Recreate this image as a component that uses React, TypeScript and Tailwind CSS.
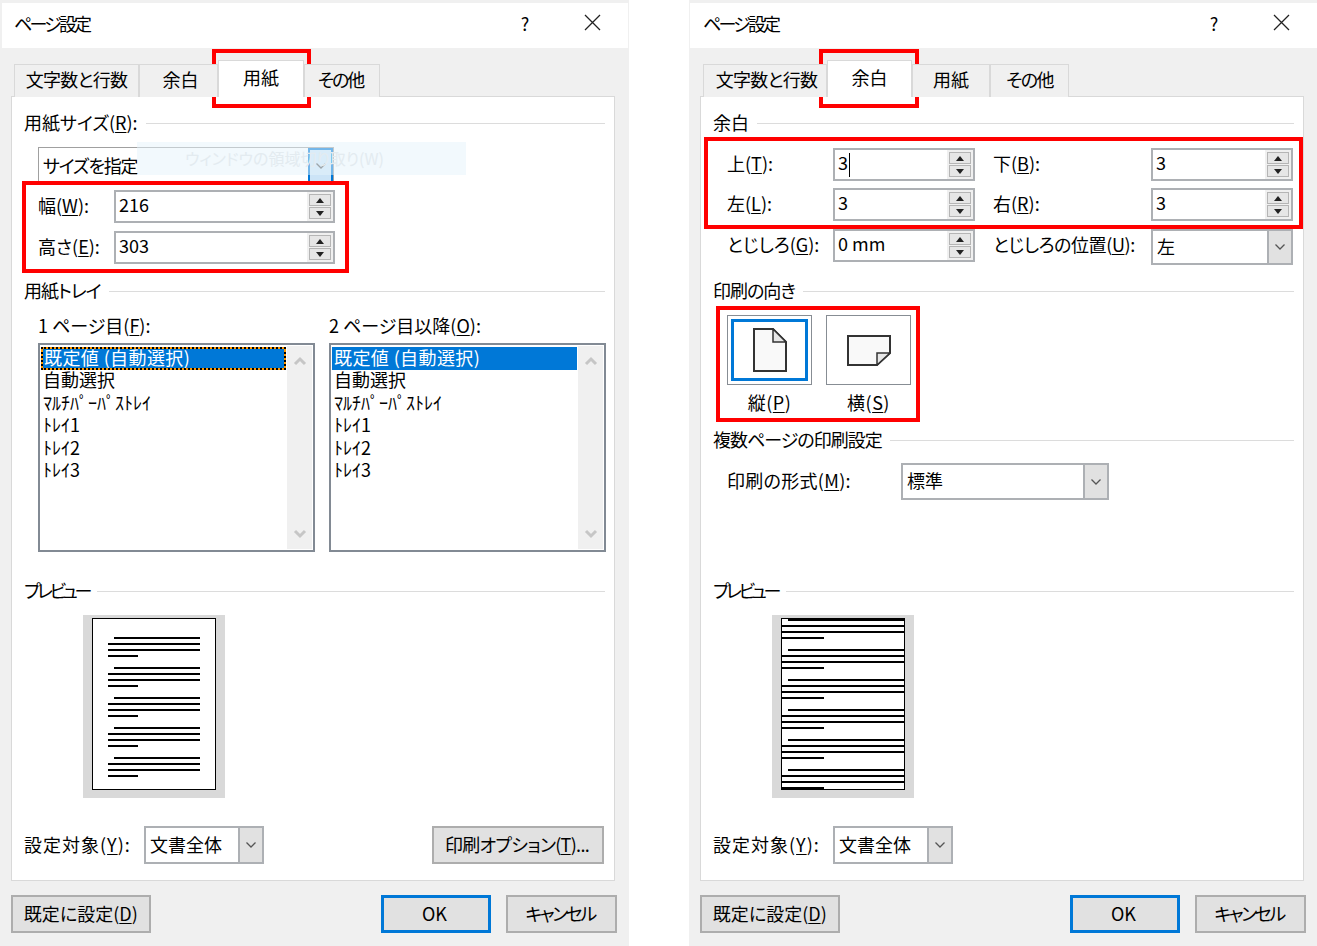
import React from "react";

const RED = "absolute border-4 border-[#ff0000] pointer-events-none";

function Key({ k }: { k: string }) {
  return (
    <>
      (<u className="underline-offset-2">{k}</u>)
    </>
  );
}

function Section({ title, track = "" }: { title: React.ReactNode; track?: string }) {
  return (
    <div className="flex h-[24px] items-center gap-2">
      <span className={`whitespace-nowrap pb-[2px] ${track}`}>{title}</span>
      <span className="h-px flex-1 bg-[#dcdcdc]" />
    </div>
  );
}

function Chevron() {
  return (
    <svg width="12" height="8" viewBox="0 0 12 8" fill="none" stroke="#555" strokeWidth="1.3">
      <path d="M1.5 1.5 L6 6 L10.5 1.5" />
    </svg>
  );
}

function Spinner({ value, caret }: { value: string; caret?: boolean }) {
  return (
    <div className="flex h-[33px] w-full items-stretch border-2 border-[#adb0b4] bg-white">
      <div className="flex flex-1 items-center pl-[3px]">
        <span className="pb-[5px]">{value}</span>
        {caret && <span className="ml-px h-[24px] w-px bg-black" />}
      </div>
      <div className="flex w-[26px] flex-col gap-px bg-[#f0f0f0] p-[2px]">
        <div className="flex flex-1 items-center justify-center border border-[#b5b5b5] bg-[#e6e6e6]">
          <svg width="8" height="5" viewBox="0 0 8 5">
            <path d="M4 0 L8 5 L0 5 Z" fill="#222" />
          </svg>
        </div>
        <div className="flex flex-1 items-center justify-center border border-[#b5b5b5] bg-[#e6e6e6]">
          <svg width="8" height="5" viewBox="0 0 8 5">
            <path d="M0 0 L8 0 L4 5 Z" fill="#222" />
          </svg>
        </div>
      </div>
    </div>
  );
}

function Combo({ value, className }: { value: string; className: string }) {
  return (
    <div className={`flex items-stretch border-2 border-[#adb0b4] bg-white ${className}`}>
      <div className="flex flex-1 items-center pb-[3px] pl-[4px]">{value}</div>
      <div className="flex w-[24px] items-center justify-center border-l-2 border-[#adb0b4] bg-[#e1e1e1]">
        <Chevron />
      </div>
    </div>
  );
}

function Button({ children, className }: { children: React.ReactNode; className: string }) {
  return (
    <div className={`flex h-[38px] items-center justify-center border-2 border-[#adadad] bg-[#e1e1e1] pb-[2px] ${className}`}>
      {children}
    </div>
  );
}

function ScrollArrow({ down }: { down?: boolean }) {
  return (
    <svg width="14" height="10" viewBox="0 0 14 10" fill="none" stroke="#c6c6c6" strokeWidth="3">
      <path d={down ? "M2 2 L7 7 L12 2" : "M2 8 L7 3 L12 8"} />
    </svg>
  );
}

function TrayList({ focused }: { focused?: boolean }) {
  const rows = ["自動選択", "ﾏﾙﾁﾊﾟｰﾊﾟｽﾄﾚｲ", "ﾄﾚｲ1", "ﾄﾚｲ2", "ﾄﾚｲ3"];
  const selected = "h-full bg-[#0078d7] text-white tracking-[0.4px]";
  return (
    <div className="flex h-[209px] w-[277px] border-2 border-[#828a94] bg-white p-px">
      <div className="min-w-0 flex-1 pt-px">
        {focused ? (
          <div className="h-[23px] border-2 border-dotted border-black bg-[#ff9900]">
            <div className={`${selected} pl-px leading-[16px]`}>既定値 (自動選択)</div>
          </div>
        ) : (
          <div className="h-[23px]">
            <div className={`${selected} pl-[2px] leading-[20px]`}>既定値 (自動選択)</div>
          </div>
        )}
        <div className="mt-[-2px]">
          {rows.map((row) => (
            <div key={row} className="h-[22.6px] pl-[2px] leading-[22.6px] [font-feature-settings:normal]">
              {row}
            </div>
          ))}
        </div>
      </div>
      <div className="ml-px flex w-[25px] flex-col items-center justify-between bg-[#f0f0f0] py-[10px]">
        <ScrollArrow />
        <ScrollArrow down />
      </div>
    </div>
  );
}

function Lines({ full }: { full?: boolean }) {
  return (
    <div className="mb-[10px] flex flex-col gap-[4px]">
      <div className="ml-[6px] h-[2px] bg-black" />
      <div className="h-[2px] bg-black" />
      <div className="h-[2px] bg-black" />
      <div className={`h-[2px] ${full ? "w-[42px]" : "w-[30px]"} bg-black`} />
    </div>
  );
}

function Preview({ full }: { full?: boolean }) {
  const groups = full ? [0, 1, 2, 3, 4, 5] : [0, 1, 2, 3, 4];
  return (
    <div className="ml-[59px] mt-[12px] h-[183px] w-[142px] bg-[#d9d9d9] pl-[9px] pt-[3px]">
      <div
        className={`h-[172px] w-[124px] overflow-hidden border border-black bg-white ${
          full ? "pt-0" : "px-[15px] pt-[18px]"
        }`}
      >
        {groups.map((i) => (
          <Lines key={i} full={full} />
        ))}
      </div>
    </div>
  );
}

function BottomRow({ options }: { options?: boolean }) {
  return (
    <div className="mt-[28px] flex h-[38px] items-center">
      <span className="w-[120px] whitespace-nowrap pb-[3px] tracking-[1px]">
        設定対象
        <Key k="Y" />:
      </span>
      <Combo value="文書全体" className="h-[38px] w-[120px]" />
      {options && (
        <Button className="ml-[168px] w-[172px]">
          <span className="pr-[2px] tracking-[-0.7px]">
            印刷オプション
            <Key k="T" />
            ...
          </span>
        </Button>
      )}
    </div>
  );
}

type Tab = { label: string; width: string; active?: boolean; cls?: string };

function Dialog({
  width,
  titleInset,
  tabs,
  children,
  overlays,
}: {
  width: string;
  titleInset: string;
  tabs: Tab[];
  children: React.ReactNode;
  overlays: React.ReactNode;
}) {
  return (
    <div className={`relative h-[946px] shrink-0 bg-[#f0f0f0] pt-[3px] ${width}`}>
      <div className={`flex h-[45px] items-center bg-white pb-[6px] ${titleInset}`}>
        <span className="tracking-[-2.8px]">ページ設定</span>
        <span className="ml-auto w-[20px] text-center">?</span>
        <span className="ml-[47px] mr-[26px] flex w-[20px] justify-center">
          <svg width="17" height="17" viewBox="0 0 17 17" fill="none" stroke="#222" strokeWidth="1.3">
            <path d="M1 1 L16 16 M16 1 L1 16" />
          </svg>
        </span>
      </div>
      <div className="relative z-10 mb-[-1px] ml-[14px] mt-[12px] flex h-[37px] items-end">
        {tabs.map((tab) => (
          <div
            key={tab.label}
            className={`flex items-center justify-center whitespace-nowrap border border-b-0 border-[#d9d9d9] ${tab.width} ${
              tab.active ? "h-[37px] bg-white pb-[5px]" : "h-[33px] bg-[#f0f0f0] pb-[4px]"
            } ${tab.cls ?? ""}`}
          >
            {tab.label}
          </div>
        ))}
      </div>
      <div className="ml-[11px] h-[785px] w-[604px] border border-[#d9d9d9] bg-white pl-[12px] pr-[9px] pt-[14px]">
        {children}
      </div>
      <div className="ml-[11px] mt-[14px] flex w-[606px]">
        <Button className="w-[140px]">
          <span>
            既定に設定
            <Key k="D" />
          </span>
        </Button>
        <div className="ml-[230px] flex h-[38px] w-[111px] items-center justify-center border-[3px] border-[#0078d7] bg-[#e1e1e1] pb-[2px] pr-[3px]">
          OK
        </div>
        <Button className="ml-[15px] w-[111px] pr-[3px]">
          <span className="tracking-[-2.4px]">キャンセル</span>
        </Button>
      </div>
      {overlays}
    </div>
  );
}

function PaperTab() {
  return (
    <>
      <Section
        title={
          <>
            用紙サイズ
            <Key k="R" />:
          </>
        }
      />
      <div className="ml-[14px] mt-[12px] flex h-[37px] w-[296px] items-stretch border border-[#a0a0a0] bg-white">
        <div className="flex flex-1 items-center pb-[2px] pl-[4px] tracking-[-1.2px]">サイズを指定</div>
        <div className="flex w-[25px] items-center justify-center border-2 border-[#0078d7] bg-[#cce4f7]">
          <Chevron />
        </div>
      </div>
      <div className="ml-[14px] mt-[6px] flex items-center">
        <span className="w-[76px] pb-[3px]">
          幅<Key k="W" />:
        </span>
        <div className="w-[221px]">
          <Spinner value="216" />
        </div>
      </div>
      <div className="ml-[14px] mt-[8px] flex items-center">
        <span className="w-[76px] pb-[3px]">
          高さ<Key k="E" />:
        </span>
        <div className="w-[221px]">
          <Spinner value="303" />
        </div>
      </div>
      <div className="mt-[15px]">
        <Section title="用紙トレイ" track="tracking-[-1px]" />
      </div>
      <div className="ml-[14px] mt-[11px] flex gap-[14px]">
        <div className="w-[277px]">
          <div className="h-[24px] leading-[22px]">
            1 ページ目
            <Key k="F" />:
          </div>
          <div className="mt-[5px]">
            <TrayList focused />
          </div>
        </div>
        <div className="w-[277px]">
          <div className="h-[24px] leading-[22px]">
            2 ページ目以降
            <Key k="O" />:
          </div>
          <div className="mt-[5px]">
            <TrayList />
          </div>
        </div>
      </div>
      <div className="mt-[27px]">
        <Section title="プレビュー" track="tracking-[-3.4px]" />
      </div>
      <Preview />
      <BottomRow options />
    </>
  );
}

function Margin({ label, k, value, caret, width }: { label: string; k: string; value: string; caret?: boolean; width: string }) {
  return (
    <>
      <span className={`flex h-[33px] items-center whitespace-nowrap pb-[3px] ${width}`}>
        <span>
          {label}
          <Key k={k} />:
        </span>
      </span>
      <div className="w-[142px]">
        <Spinner value={value} caret={caret} />
      </div>
    </>
  );
}

function PortraitIcon() {
  return (
    <svg width="34" height="44" viewBox="0 0 34 44">
      <path d="M1 1 H20 L33 14 V43 H1 Z" fill="#f9f9f9" stroke="#333" strokeWidth="2" />
      <path d="M20 1 V14 H33 Z" fill="#e8e8e8" stroke="#333" strokeWidth="1.5" />
    </svg>
  );
}

function LandscapeIcon() {
  return (
    <svg width="44" height="31" viewBox="0 0 44 31">
      <path d="M1 1 H43 V18 L30 30 H1 Z" fill="#f9f9f9" stroke="#333" strokeWidth="2" />
      <path d="M30 30 V18 H43 Z" fill="#e8e8e8" stroke="#333" strokeWidth="1.5" />
    </svg>
  );
}

function MarginTab() {
  return (
    <>
      <Section title="余白" />
      <div className="ml-[14px] mt-[13px] flex items-center">
        <Margin label="上" k="T" value="3" caret width="w-[106px]" />
        <span className="w-[18px]" />
        <Margin label="下" k="B" value="3" width="w-[158px]" />
      </div>
      <div className="ml-[14px] mt-[7px] flex items-center">
        <Margin label="左" k="L" value="3" width="w-[106px]" />
        <span className="w-[18px]" />
        <Margin label="右" k="R" value="3" width="w-[158px]" />
      </div>
      <div className="ml-[14px] mt-[8px] flex h-[36px] items-start">
        <Margin label="とじしろ" k="G" value="0 mm" width="w-[106px]" />
        <span className="w-[18px]" />
        <span className="flex h-[33px] w-[158px] items-center whitespace-nowrap pb-[3px] tracking-[-0.4px]">
          <span>
            とじしろの位置
            <Key k="U" />:
          </span>
        </span>
        <Combo value="左" className="h-[36px] w-[142px]" />
      </div>
      <div className="mt-[14px]">
        <Section title="印刷の向き" track="tracking-[-1px]" />
      </div>
      <div className="ml-[14px] mt-[12px] flex gap-[14px]">
        <div className="w-[85px]">
          <div className="h-[70px] border border-[#878d94] p-[3px]">
            <div className="flex h-full items-center justify-center border-[3px] border-[#0078d7]">
              <PortraitIcon />
            </div>
          </div>
          <div className="mt-[7px] h-[24px] text-center leading-[20px] tracking-[0.5px]">
            縦<Key k="P" />
          </div>
        </div>
        <div className="w-[85px]">
          <div className="flex h-[70px] items-center justify-center border border-[#878d94]">
            <LandscapeIcon />
          </div>
          <div className="mt-[7px] h-[24px] text-center leading-[20px] tracking-[0.5px]">
            横<Key k="S" />
          </div>
        </div>
      </div>
      <div className="mt-[12px]">
        <Section title="複数ページの印刷設定" track="tracking-[-1px]" />
      </div>
      <div className="ml-[14px] mt-[11px] flex h-[37px] items-center">
        <span className="w-[174px] whitespace-nowrap pb-[3px] tracking-[0.3px]">
          印刷の形式
          <Key k="M" />:
        </span>
        <Combo value="標準" className="h-[37px] w-[208px]" />
      </div>
      <div className="mt-[79px]">
        <Section title="プレビュー" track="tracking-[-3.4px]" />
      </div>
      <Preview full />
      <BottomRow />
    </>
  );
}

export default function App() {
  return (
    <div className="flex h-[946px] w-[1317px] gap-[60px] overflow-hidden bg-white text-[18px] leading-[24px] text-black [font-family:'Noto_Sans_CJK_JP','Liberation_Sans',sans-serif] [font-feature-settings:'palt']">
      <Dialog
        width="w-[629px]"
        titleInset="ml-[2px] mr-px pl-[12px]"
        tabs={[
          { label: "文字数と行数", width: "w-[125px]", cls: "tracking-[-0.7px]" },
          { label: "余白", width: "w-[79px]", cls: "pl-[4px]" },
          { label: "用紙", width: "w-[86px]", active: true },
          { label: "その他", width: "w-[76px]", cls: "tracking-[-2px] pr-[3px]" },
        ]}
        overlays={
          <>
            <div className="absolute left-[137px] top-[142px] flex h-[33px] w-[329px] items-center justify-center bg-[#e5f3fb]/50 pb-[2px] pr-[34px] text-[16px] text-[#e3ebf0]">
              ウィンドウの領域切り取り(W)
            </div>
            <div className={`${RED} left-[212px] top-[49px] h-[59px] w-[99px]`} />
            <div className={`${RED} left-[22px] top-[181px] h-[92px] w-[327px]`} />
          </>
        }
      >
        <PaperTab />
      </Dialog>
      <Dialog
        width="w-[628px]"
        titleInset="ml-px pl-[13px]"
        tabs={[
          { label: "文字数と行数", width: "w-[124px]", cls: "tracking-[-0.7px] pl-[3px]" },
          { label: "余白", width: "w-[85px]", active: true },
          { label: "用紙", width: "w-[78px]" },
          { label: "その他", width: "w-[79px]", cls: "tracking-[-1.5px]" },
        ]}
        overlays={
          <>
            <div className={`${RED} left-[130px] top-[49px] h-[59px] w-[100px]`} />
            <div className={`${RED} left-[15px] top-[137px] h-[92px] w-[599px]`} />
            <div className={`${RED} left-[27px] top-[306px] h-[116px] w-[204px]`} />
          </>
        }
      >
        <MarginTab />
      </Dialog>
    </div>
  );
}
